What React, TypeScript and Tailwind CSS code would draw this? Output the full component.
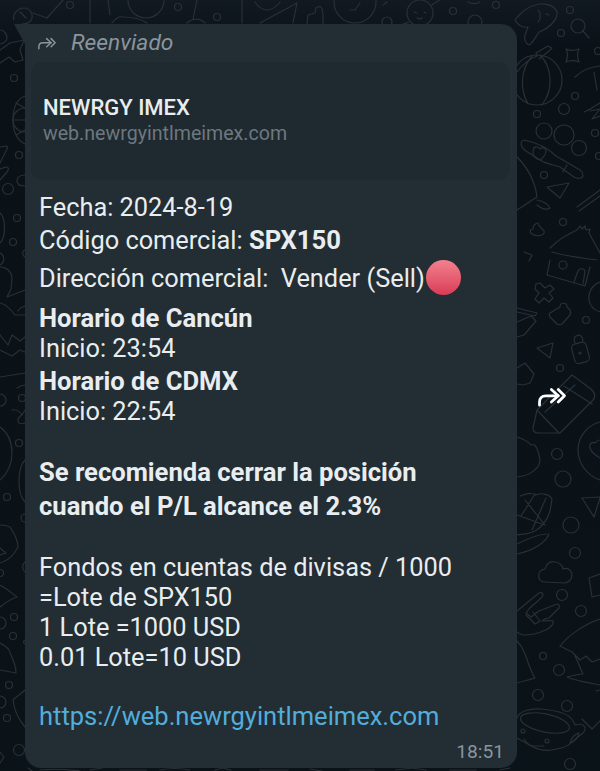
const font = "font-['Roboto',sans-serif]";

const ForwardIcon = ({ className }: { className: string }) => (
  <svg viewBox="0 0 24 16" fill="none" stroke="currentColor" strokeLinecap="round" strokeLinejoin="round" className={className}>
    <path d="M2 14.500V12c0-3 2-5 5-5h10" />
    <path d="M11.500 2 17 7l-5.500 5" />
    <path d="M17 2l5 5-5 5" />
  </svg>
);

// wallpaper drawing, only the strips around the bubble can be seen
const Doodles = () => (
  <svg viewBox="0 0 600 771" fill="none" stroke="#293036" strokeWidth="1.200" strokeLinecap="round" strokeLinejoin="round" className="absolute inset-0 h-full w-full">
    {/* top strip */}
    <path d="M14 20c-2-6 4-12 10-12s9 6 8 10-4 6-10 6M20 12l6 6M33 13l14 5L63 0" />
    <circle cx="70" cy="5" r="3.500" />
    <path d="M90 0v23M108 0l2 15" />
    <circle cx="146" cy="0" r="18" />
    <path d="M112 23c3-5 8-7 11-6 8 0 18 2 24 6" />
    <circle cx="178" cy="7" r="3.500" />
    <path d="M197 0l-4 19M187 23c4-4 12-6 18 0" />
    <circle cx="217" cy="17" r="3.500" />
    <path d="M242 0v23M255 2c4 6 8 8 12 8s9-3 13-8M260 23l37-20-4 20" />
    <path d="M307 24l1-9 7-2 1-5c2-2 5-2 6 1l1 5v10" />
    <circle cx="355" cy="2" r="21" />
    <path d="M350 10h5l5-7M383 5l4-3" />
    <circle cx="387" cy="22" r="5" />
    <circle cx="420" cy="13" r="13" />
    <path d="M414 12l3 1M424 12l2 1M417 18c2 1 4 1 5 0M409 22c-3 1-5 2-6 2M432 5c2-2 6-4 8-5" />
    <circle cx="453" cy="11" r="3.500" />
    <circle cx="496" cy="5" r="3.500" />
    <path d="M468 2c4 2 9 2 12 0" />
    <circle cx="475" cy="22" r="7" />

    {/* right column, top */}
    <path d="M515 20c6-8 14-14 24-16 8-1 16 2 18 8 1 8-8 16-18 20-3 4-6 11-10 13-4-2-5-6-4-10l3-8c-5 1-10-2-13-7z" />
    <path d="M538 10c3 2 3 8 0 12M546 14l3 1" />
    <circle cx="570" cy="10" r="3.500" />
    <circle cx="561" cy="33" r="3.500" />
    <circle cx="578" cy="26" r="7" />
    <path d="M583 31l6 7" />
    <path d="M566 49c4 2 8 2 13 0-2 4-2 8 0 13-5-2-9-2-13 0 2-5 2-9 0-13z" />
    <circle cx="598" cy="51" r="3.500" />
    <circle cx="537" cy="80" r="25" />
    <path d="M532 56c-12 14-12 34-4 48M540 55c12 12 14 34 2 50M517 72c6-8 14-14 20-16" />
    <path d="M537 56l-1-3 12-7 4 2-3 3-10 8" />
    <path d="M575 77c6-6 14-10 25-11M594 72l3 18" />
    <circle cx="575" cy="96" r="3.500" />
    <circle cx="564" cy="109" r="5.500" />
    <circle cx="537" cy="114" r="3.500" />
    <path d="M584 112c6-2 10-6 16-9M590 111l10-2-8 10 8-3" />
    <circle cx="544" cy="131" r="8" />
    <circle cx="564" cy="135" r="10" />
    <circle cx="579" cy="148" r="7.500" />
    <circle cx="595" cy="133" r="3.500" />
    <circle cx="599" cy="156" r="3.500" />
    <path d="M524 140c10 2 22 6 32 16l24 14c4 3 4 8 0 8-2 1-4 0-6-1l-14-10c-4-2-12-2-20-7l-14-9c-6-4-6-10-2-11z" />
    <path d="M534 148c2-2 5-1 6 1 2-2 6-1 6 2s-3 7-6 9c-4-1-7-4-7-7 0-2 0-4 1-5zM567 165l-4 7" />
    <circle cx="544" cy="175" r="3.500" />
    <path d="M547 187l22-4-9 15z" />
    <path d="M577 207l23-17M579 211l21-15" />
    <path d="M517 157c10 10 18 24 20 40-5 3-12 8-20 13M537 200c5 1 11 4 13 8-3 2-8 1-13-3" />
    <path d="M532 234c-3-2-2-5 1-5 0-4 3-6 5-6 0 3 3 4 4 6 3 1 3 5 0 6-3 1-7 1-10-1z" />
    <circle cx="563" cy="222" r="3.500" />
    <path d="M550 248c8-8 18-14 27-18l3-4 2 3 3-3 1 4 4-1-1 4 11 20" />
    <path d="M524 252l8 3-3 6" />

    {/* right column, house and pencil */}
    <path d="M552 252c14 4 28 6 45 8M550 260l-3 15 38 11 5-19" />
    <circle cx="563" cy="265" r="4" />
    <path d="M574 282l4-11c1-3 6-3 7 0l-2 13" />
    <path d="M536 284l4-1 5 5 5-3 4 4-5 4 4 5-4 4-5-4-5 5-4-4 4-6-4-4z" />
    <path d="M600 282c-8 3-12 10-11 18 1 6 5 10 11 12" />
    <path d="M555 310l5-3c0-5 7-5 7 0l3 3c1 2 1 3 0 5l-8 9c-2 1-3 1-5 0l-7-7c-1-2-1-3 0-4z" />
    <circle cx="586" cy="320" r="3.500" />
    <path d="M517 308l20 5-2 3-18-4M517 322l14-6 5 5-12 14-7 2" />
    <path d="M537 348l16-5-3 15z" />
    <rect x="573" y="343" width="15" height="20" rx="4" transform="rotate(-15 580 353)" />
    <path d="M575 343c-3-7 4-10 7-6l1 4" />
    <circle cx="580" cy="353" r="1" />
    <circle cx="560" cy="368" r="3.500" />
    <path d="M517 368l8-5 9 11-4 9-7 2-6-1" />
    <path d="M572 375l19 14c4 4 5 8 2 11l-33 33h-22c-3 0-5-1-5-5l4-18zM537 410l22 23M564 386l28 18M545 412l30-27" />
    <path d="M517 437c6 2 10 3 14 8 5-3 8 8 9 15 0 8-10 16-23 17" />
    <path d="M600 422c-12 3-22 14-22 28 0 14 10 26 22 30M600 440c-3 0-4 2-5 3-3-2-6 1-5 5 1 4 5 7 10 10" />
    <circle cx="557" cy="454" r="5.500" />
    <circle cx="563" cy="479" r="8" />
    <path d="M582 498l18-1M594 517l6-19M582 498l12 19" />

    {/* right column, bottom */}
    <path d="M520 496c6-2 12-4 16-1 6-3 14 0 16 4l-2 12c-3 10-8 16-15 20-8 4-14 3-18 4M525 500l20 25M535 494l-14 22M546 498l-14 32M517 515l28 10" />
    <path d="M549 534c-3 8-14 16-32 20M547 534c-8 0-18 4-30 10" />
    <circle cx="571" cy="525" r="8" />
    <circle cx="575" cy="553" r="5.500" />
    <path d="M545 582c-8 0-9-12 0-13 2-6 6-8 10-7 4 0 8 4 8 7 5-2 9 2 9 6s-3 8-8 8z" />
    <circle cx="562" cy="595" r="5.500" />
    <path d="M600 574l-11 4 3 19 8-2" />
    <circle cx="581" cy="611" r="5.500" />
    <path d="M517 611l22-18c2-1 4 0 4 2 0 3-11 10-14 14l-3 4 5 4 8-6 18-7c2 0 3 2 2 4l-10 10c-2 0-5 1-7 3 3 0 8-1 11 0 1 4-4 8-10 10-6 3-14 4-20 4-3-1-5-2-6-3" />
    <path d="M526 615l9 9 5-3-7-9" />
    <path d="M560 646c8-10 24-22 40-27M560 646l12 6 8 8 6-4 6 6 8-3M575 656c4 8 6 14 8 18-4 0-12 2-16 3 6 3 22 6 33 8" />
    <path d="M517 641c5 5 6 8 8 13 3 8 6 18 10 24-6 2-12 3-18 5" />
    <circle cx="543" cy="656" r="3.500" />
    <circle cx="559" cy="670" r="5.500" />
    <circle cx="538" cy="695" r="5.500" />
    <circle cx="567" cy="706" r="5.500" />
    <path d="M582 719l10 10 8-8M600 690l-4 1" />
    <ellipse cx="545" cy="723" rx="25" ry="9" transform="rotate(12 545 723)" />
    <path d="M517 718c2-7 14-10 24-9 12 1 28 4 32 12l2 4c4-1 8-1 9 1 2 2 1 5-1 7l-10 8c-3 4-10 7-16 8-8 2-16 2-24-2l-16-9" />
    <path d="M570 743c1-5 5-9 9-10-1 5-5 9-9 10z" />
    <circle cx="523" cy="731" r="2" />
    <circle cx="547" cy="741" r="2" />
    <path d="M524 739c3 5 6 7 10 7h10" />
    <circle cx="570" cy="764" r="5.500" />

    {/* left column */}
    <path d="M0 30c4 0 7 4 7 8 0 3-3 5-7 6M0 50l10-7 14-3-4 10 3 10-8 2-6-5-9 6" />
    <circle cx="14" cy="78" r="3.500" />
    <circle cx="25" cy="120" r="12" />
    <path d="M25 96c-8 3-12 12-12 24s4 20 12 24M13 120h12M16 103l9 5M16 135l9-5" />
    <path d="M0 163l6-12c2-4 2-5 0-5l-6 1" />
    <circle cx="19" cy="155" r="3.500" />
    <path d="M0 180l7-8c2-3 2-5-1-5l-6 2" />
    <path d="M25 175c-6 0-8 3-8 6s2 5 8 5" />
    <circle cx="8" cy="189" r="5.500" />
    <path d="M0 213c6 5 6 24 0 30" />
    <circle cx="17" cy="218" r="3.500" />
    <circle cx="13" cy="242" r="3.500" />
    <path d="M0 253c5 2 5 9 0 12M25 250c-3 1-3 6 0 7" />
    <path d="M0 267c6 0 12 4 12 12l-1 10-4 8 18-7M0 303c6 1 12 8 15 12l10 0M25 306c-3 1-6 3-7 5" />
    <path d="M0 335l8 10 4-10 8 6 5-4M0 350l12 6 8-6 5 2" />
    <path d="M0 377l25-4M17 388c3-2 6-3 8-3" />

    <circle cx="0" cy="400" r="6" />
    <circle cx="22" cy="398" r="3.500" />
    <path d="M12 410c4-1 8 2 10 5-4 2-5 6-3 8 2 1 4 1 6 0M25 410l-3 5" />
    <path d="M0 427c8 6 12 16 12 26 0 10-4 20-12 27" />
    <circle cx="19" cy="443" r="3.500" />
    <path d="M25 460c-8 8-8 34 0 42" />
    <circle cx="7" cy="497" r="3.500" />
    <circle cx="25" cy="518" r="4" />
    <path d="M0 525c4 0 8 1 10 2 4 6 8 14 8 20-4 8-10 14-18 16M0 548l6 5-6 2" />
    <path d="M25 562c-3 2-3 8 0 10" />
    <circle cx="0" cy="573" r="3.500" />
    <path d="M0 585c6 3 12 8 17 12-6 2-12 6-17 10" />
    <circle cx="14" cy="617" r="3.500" />
    <circle cx="0" cy="623" r="6" />
    <circle cx="13" cy="636" r="3.500" />
    <path d="M0 643c6 3 10 6 10 10 3 6 6 14 6 20l-16-3M25 640c-2 1-2 3 0 4" />
    <circle cx="9" cy="685" r="3.500" />
    <circle cx="0" cy="702" r="6" />
    <path d="M25 690c-4 4-8 6-12 10 1 10 6 20 12 27" />
    <circle cx="7" cy="718" r="3.500" />
    <path d="M0 752l4 5-4 6" />
    <circle cx="19" cy="750" r="5.500" />
    <path d="M28 768l4 3" />

    {/* bottom strip */}
    <path d="M40 770c20-2 30 0 40 1M90 770l12-2M120 770h26M160 770c10-2 20-2 30 0M215 770l8-2 8 2M260 770h28M310 769l12 2M350 770h24M396 770l16-2 14 2M450 770h26M500 770l10-2" />
  </svg>
);

export default function App() {
  return (
    <div className={`${font} relative h-[771px] w-[600px] overflow-hidden bg-gradient-to-b from-[#111a20] via-[#0a1218] via-[6%] to-[#0a1318]`}>
      <Doodles />

      {/* swipe to forward hint */}
      <ForwardIcon className="absolute left-[537px] top-[387px] h-[20px] w-[30px] stroke-[2.200] text-white" />

      <div className="relative flex flex-col pl-[25px] pt-[24px]">
        {/* bubble tail */}
        <div className="absolute left-[14px] top-[24px] h-[22px] w-[12px] bg-[#222d34] [clip-path:polygon(0_0,100%_0,100%_100%)]" />

        <div className="h-[744px] w-[492px] rounded-[16px] rounded-tl-none bg-[#222d34]">
          <div className="flex h-[38px] items-center pl-[12px]">
            <ForwardIcon className="h-[13px] w-[20px] stroke-[1.800] text-[#8a959c]" />
            <span className="ml-[14px] text-[22.800px] italic leading-[28px] text-[#8a959c]">Reenviado</span>
          </div>

          {/* link preview */}
          <div className="ml-[6px] mr-[7px] flex h-[118px] flex-col rounded-[12px] bg-[#1f2930] pl-[12px] pt-[33px]">
            <span className="text-[22px] font-medium leading-[26px] text-[#e9edef]">NEWRGY IMEX</span>
            <span className="text-[19.600px] leading-[26px] text-[#6d787f]">web.newrgyintlmeimex.com</span>
          </div>

          <div className="pl-[14px] pt-[12px] text-[25.350px] leading-[30px] text-[#e9edef]">
            <p>Fecha: 2024-8-19</p>
            <p className="mt-[3px]">
              Código comercial: <span className="text-[25.600px] font-bold">SPX150</span>
            </p>
            <p className="mt-[5px] flex items-center whitespace-pre">
              Dirección comercial:  Vender (Sell)
              <span className="ml-[1px] h-[35px] w-[35px] rounded-full bg-gradient-to-b from-[#f2808f] to-[#d93a56]" />
            </p>
            <p className="mt-[8px] text-[25.600px] font-bold">Horario de Cancún</p>
            <p>Inicio: 23:54</p>
            <p className="mt-[3px] text-[25.600px] font-bold">Horario de CDMX</p>
            <p>Inicio: 22:54</p>
            <p className="mt-[31px] text-[25.600px] font-bold">Se recomienda cerrar la posición</p>
            <p className="mt-[4px] text-[25.600px] font-bold">cuando el P/L alcance el 2.3%</p>
            <p className="mt-[31px]">Fondos en cuentas de divisas / 1000</p>
            <p>=Lote de SPX150</p>
            <p>1 Lote =1000 USD</p>
            <p>0.01 Lote=10 USD</p>
            <p className="mt-[29px] text-[25.500px] text-[#53addb]">https://web.newrgyintlmeimex.com</p>
          </div>

          <div className="mt-[9px] pr-[13px] text-right text-[19.200px] leading-[24px] text-[#8a959c]">18:51</div>
        </div>
      </div>
    </div>
  );
}
